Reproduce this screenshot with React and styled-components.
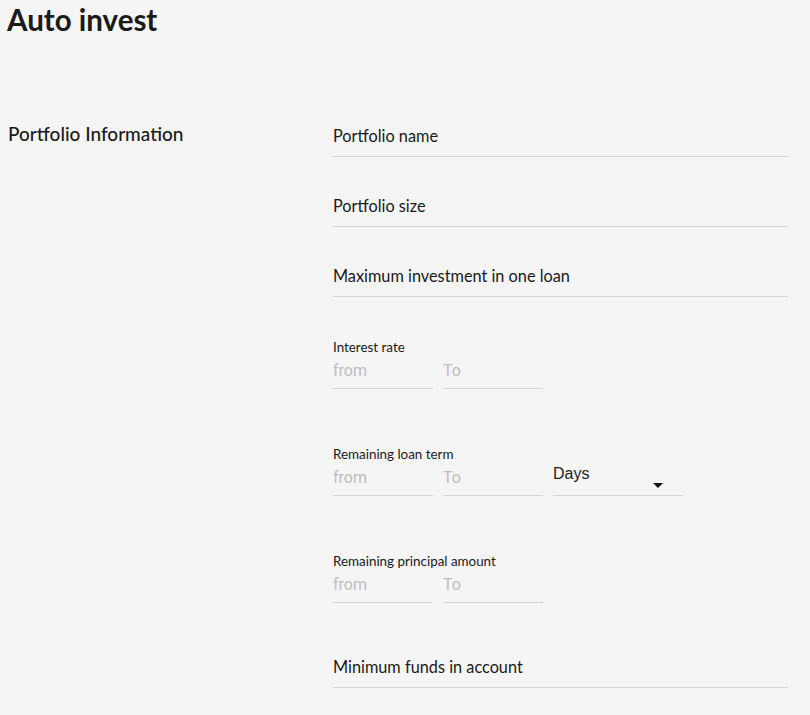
import React from "react";
import styled, { createGlobalStyle } from "styled-components";

const GlobalStyle = createGlobalStyle`
  html, body {
    margin: 0;
    padding: 0;
    background: #f5f5f5;
  }

  body {
    font-family: Lato, "Noto Sans", sans-serif;
    color: #1a1a1a;
  }
`;

const Page = styled.main`
  padding: 0 22px 0 7px;
`;

const Title = styled.h1`
  margin: 0;
  padding-top: 2px;
  font-size: 29.5px;
  line-height: 36px;
  font-weight: 700;
`;

const Section = styled.section`
  display: flex;
  margin-top: 84px;
`;

const SectionHeading = styled.h2`
  flex: 0 0 326px;
  margin: 0;
  padding-left: 1px;
  font-size: 19px;
  line-height: 24px;
  font-weight: 500;
`;

const Fields = styled.div`
  flex: 1;
  display: flex;
  flex-direction: column;
  margin-left: -1px;
`;

const TextField = styled.div`
  height: 35px;
  box-sizing: border-box;
  padding-top: 2px;
  margin-top: ${({ gap }) => gap}px;
  border-bottom: 1px solid #d3d3d3;
  font-size: 16.3px;
  line-height: 24px;
`;

const RangeGroup = styled.div`
  margin-top: ${({ gap }) => gap}px;
`;

const RangeLabel = styled.div`
  font-size: 13.4px;
  line-height: 16px;
  margin-bottom: 4px;
`;

const RangeRow = styled.div`
  display: flex;
  gap: 10px;
`;

const Input = styled.div`
  width: ${({ w }) => w}px;
  height: 30px;
  box-sizing: border-box;
  padding-top: 1px;
  border-bottom: 1px solid #d3d3d3;
  font-family: Roboto, "Liberation Sans", sans-serif;
  font-size: 16px;
  line-height: 22px;
  color: ${({ placeholder }) => (placeholder ? "#bdbdbd" : "#222")};
`;

const Select = styled(Input)`
  position: relative;
  padding-top: 0;
  line-height: 16px;
  font-family: "Liberation Sans", Arial, sans-serif;
`;

const Caret = styled.span`
  position: absolute;
  right: 20px;
  bottom: 7px;
  width: 0;
  height: 0;
  border-left: 5px solid transparent;
  border-right: 5px solid transparent;
  border-top: 5px solid #111;
`;

const Range = ({ label, unit, gap }) => (
  <RangeGroup gap={gap}>
    <RangeLabel>{label}</RangeLabel>
    <RangeRow>
      <Input w={100} placeholder>from</Input>
      <Input w={100} placeholder>To</Input>
      {unit && (
        <Select w={130}>
          {unit}
          <Caret />
        </Select>
      )}
    </RangeRow>
  </RangeGroup>
);

export default function App() {
  return (
    <Page>
      <GlobalStyle />
      <Title>Auto invest</Title>
      <Section>
        <SectionHeading>Portfolio Information</SectionHeading>
        <Fields>
          <TextField gap={0}>Portfolio name</TextField>
          <TextField gap={35}>Portfolio size</TextField>
          <TextField gap={35}>Maximum investment in one loan</TextField>
          <Range gap={42} label="Interest rate" />
          <Range gap={57} label="Remaining loan term" unit="Days" />
          <Range gap={57} label="Remaining principal amount" />
          <TextField gap={50}>Minimum funds in account</TextField>
        </Fields>
      </Section>
    </Page>
  );
}
